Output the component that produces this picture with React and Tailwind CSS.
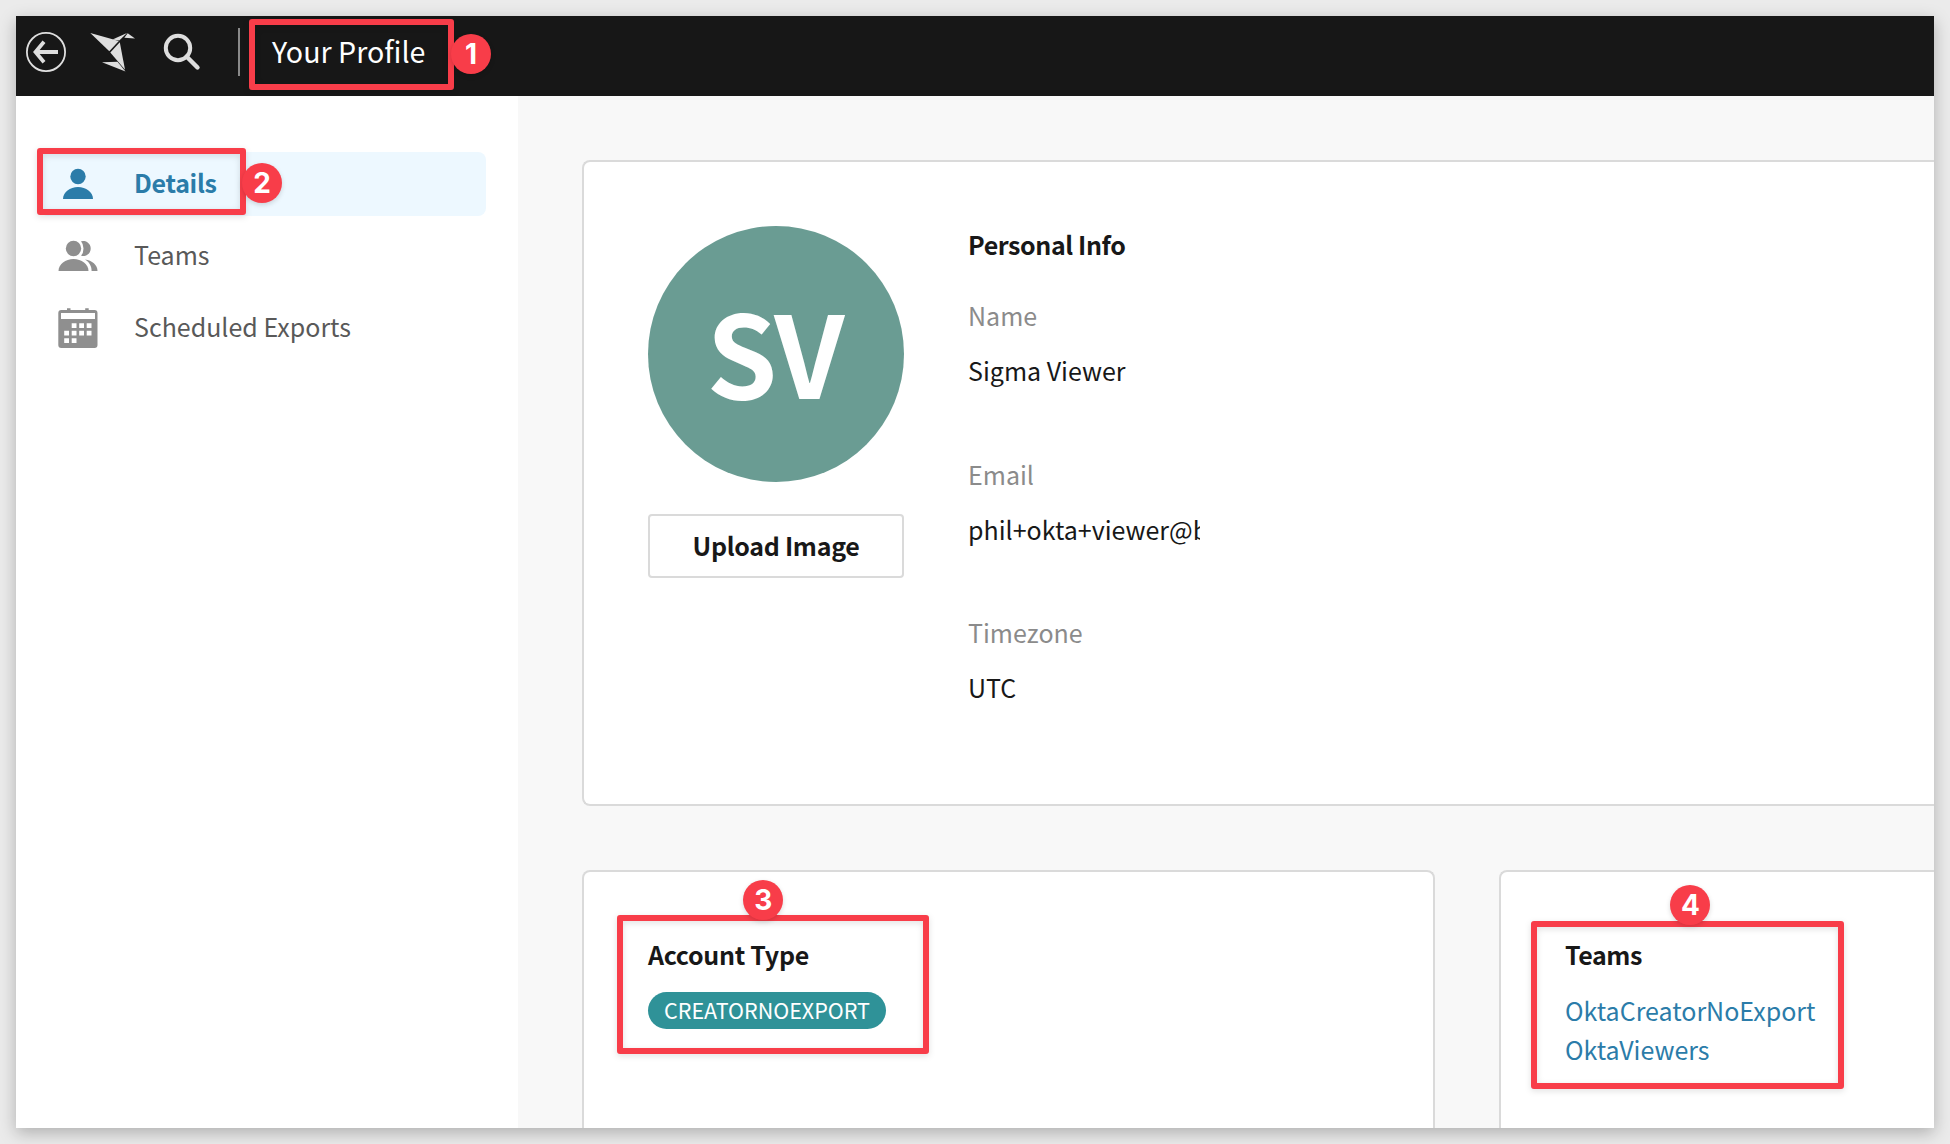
const FONT = "font-['Noto_Sans_CJK_SC','Noto_Sans',sans-serif]";

function BackIcon() {
  return (
    <svg width="40" height="40" viewBox="0 0 40 40" fill="none" stroke="#dedede">
      <circle cx="20" cy="20" r="19.1" strokeWidth="1.8" />
      <path d="M32 20H10M18 9.8L9.5 20L18 30.2" strokeWidth="3.8" />
    </svg>
  );
}

function BirdIcon() {
  return (
    <svg width="46" height="40" viewBox="0 0 46 40" fill="#dedede">
      <path d="M0.300 1L28.8 9L19.3 19.3Z" />
      <path d="M22.5 7.6L37 0.900L29.300 8.500Z" />
      <path d="M37.7 1.2L45 6.4L34.300 5.700Z" />
      <path d="M29.800 10.300L35 37.8L20.300 20.500Z" />
      <path d="M12 30.2L27.5 29.8L35.500 39.500Z" />
    </svg>
  );
}

function SearchIcon() {
  return (
    <svg width="38" height="38" viewBox="0 0 38 38" fill="none" stroke="#dedede">
      <circle cx="15" cy="15" r="12.2" strokeWidth="4" />
      <path d="M23.5 23.5L34.5 34.5" strokeWidth="4.4" strokeLinecap="round" />
    </svg>
  );
}

function PersonIcon() {
  return (
    <svg width="40" height="40" viewBox="0 0 40 40" fill="#2b7ca9">
      <circle cx="20" cy="12.5" r="7.7" />
      <path d="M5 35C5 28 12 23 20 23S35 28 35 35Z" />
    </svg>
  );
}

function PeopleIcon() {
  return (
    <svg width="40" height="40" viewBox="0 0 40 40" fill="#8f8f8f">
      <circle cx="15.5" cy="12.5" r="7.7" />
      <path d="M0.5 35C0.5 28 7.5 23 15.5 23S30.5 28 30.5 35Z" />
      <path d="M23 5.2A7.6 7.6 0 1 1 23 19.8Q25.5 17 25.5 12.5T23 5.2Z" />
      <path d="M27 23.6C34 24.5 39.5 29 39.5 35H33.6C33.6 30 31 26 27 23.6Z" />
    </svg>
  );
}

function CalendarIcon() {
  return (
    <svg width="40" height="40" viewBox="0 0 40 40" fill="#8f8f8f">
      <path
        fillRule="evenodd"
        d="M9 0.300h3.500v1.700h14.700V0.300h3.500v1.700h5.800a3 3 0 0 1 3 3v32a3 3 0 0 1-3 3H3.300a3 3 0 0 1-3-3V5a3 3 0 0 1 3-3h5.700ZM3 5v6h34V5ZM13.700 15.200v4.800h4.800v-4.800ZM21.200 15.200v4.800h4.800v-4.800ZM28.700 15.200v4.800h4.800v-4.800ZM6.200 22.800v4.800h4.800v-4.800ZM13.700 22.800v4.800h4.800v-4.800ZM21.200 22.800v4.800h4.800v-4.800ZM28.700 22.800v4.800h4.800v-4.800ZM6.200 30.200v4.800h4.800v-4.800ZM13.700 30.200v4.800h4.800v-4.800Z"
      />
    </svg>
  );
}

function NavItem({ icon, label, active }) {
  return (
    <div
      className={
        "flex h-16 items-center rounded-lg pl-[18px] " +
        (active ? "bg-[#edf8ff] font-bold text-[#2b7ca9]" : "text-[#595959]")
      }
    >
      <div className="w-[76px]">{icon}</div>
      <span className={active ? "pb-1 tracking-[-0.3px]" : "pb-1"}>{label}</span>
    </div>
  );
}

function Field({ label, value, clip }) {
  return (
    <div className="h-[158.500px]">
      <div className="h-[55px] text-[#8b8b8b]">{label}</div>
      <div className={clip ? "w-[232px] overflow-hidden whitespace-nowrap" : ""}>{value}</div>
    </div>
  );
}

function Outline({ className }) {
  return (
    <div
      className={
        "absolute rounded-[3px] border-[6px] border-[#f83d49] drop-shadow-[0_2px_3px_rgba(0,0,0,0.12)] " + className
      }
    />
  );
}

function Marker({ className, children }) {
  return (
    <div
      className={
        "absolute flex size-10 items-center justify-center rounded-full bg-[#f83d49] font-['Inter',sans-serif] text-[28px] leading-none font-bold text-white shadow-[0_2px_5px_rgba(0,0,0,0.15)] " +
        className
      }
    >
      {children}
    </div>
  );
}

export default function App() {
  return (
    <div className={"relative h-[1144px] w-[1950px] overflow-hidden bg-[#ebebeb] p-4 text-[25px] leading-10 text-[#181818] " + FONT}>
      <div className="flex h-[1112px] w-[1918px] flex-col overflow-hidden bg-white shadow-[0_5px_16px_rgba(0,0,0,0.26)]">
        <header className="flex h-20 shrink-0 items-center bg-[#171717] pb-2 pl-[10px] text-white">
          <BackIcon />
          <div className="ml-6">
            <BirdIcon />
          </div>
          <div className="ml-[27px]">
            <SearchIcon />
          </div>
          <div className="ml-[37px] h-12 w-0.5 bg-[#8a8a8a]" />
          <h1 className="ml-8 pb-0.5 text-[28.600px]">Your Profile</h1>
        </header>

        <div className="flex min-h-0 flex-1">
          <nav className="flex w-[502px] shrink-0 flex-col gap-2 pt-14 pr-8 pl-6">
            <NavItem active icon={<PersonIcon />} label="Details" />
            <NavItem icon={<PeopleIcon />} label="Teams" />
            <NavItem icon={<CalendarIcon />} label="Scheduled Exports" />
          </nav>

          <main className="flex min-w-0 flex-1 flex-col gap-16 overflow-hidden bg-[#f8f8f8] pt-16 pl-16">
            <section className="flex h-[646px] shrink-0 gap-16 rounded-l-lg border-2 border-r-0 border-[#dadada] bg-white px-16 pt-16">
              <div className="flex w-64 flex-col gap-8">
                <div className="flex size-64 items-center justify-center rounded-full bg-[#6a9c93] pr-1 pb-2 text-[113.500px] leading-none font-bold tracking-[-3px] text-white">
                  SV
                </div>
                <button className="h-16 rounded border-2 border-[#dadada] pb-0.5 font-bold tracking-[-0.3px]">
                  Upload Image
                </button>
              </div>
              <div className="-mt-0.5">
                <h2 className="h-[71px] font-bold tracking-[-0.4px]">Personal Info</h2>
                <Field label="Name" value="Sigma Viewer" />
                <Field label="Email" value="phil+okta+viewer@b" clip />
                <Field label="Timezone" value="UTC" />
              </div>
            </section>

            <div className="flex flex-1 gap-16">
              <section className="w-[853px] shrink-0 rounded-t-lg border-2 border-b-0 border-[#dadada] bg-white px-16 pt-[62px]">
                <h2 className="font-bold tracking-[-0.3px]">Account Type</h2>
                <span className="mt-[18px] flex h-[37px] w-[238px] items-center justify-center rounded-full bg-[#2f9298] pb-0.5 text-[21.500px] text-white">
                  CREATORNOEXPORT
                </span>
              </section>
              <section className="flex-1 rounded-tl-lg border-t-2 border-l-2 border-[#dadada] bg-white pt-[62px] pl-16">
                <h2 className="font-bold tracking-[-0.4px]">Teams</h2>
                <div className="mt-[17px] leading-[39px] text-[#2b7ca9]">
                  <div>OktaCreatorNoExport</div>
                  <div>OktaViewers</div>
                </div>
              </section>
            </div>
          </main>
        </div>
      </div>

      <Outline className="top-[19px] left-[249px] h-[71px] w-[204.500px]" />
      <Marker className="top-[34px] left-[451px]">1</Marker>
      <Outline className="top-[148px] left-[37px] h-[67px] w-[208.500px]" />
      <Marker className="top-[162.500px] left-[242px]">2</Marker>
      <Outline className="top-[915px] left-[617px] h-[139px] w-[312px]" />
      <Marker className="top-[880px] left-[743.300px]">3</Marker>
      <Outline className="top-[921px] left-[1530.500px] h-[168px] w-[313.500px]" />
      <Marker className="top-[884.500px] left-[1670.400px]">4</Marker>
    </div>
  );
}
